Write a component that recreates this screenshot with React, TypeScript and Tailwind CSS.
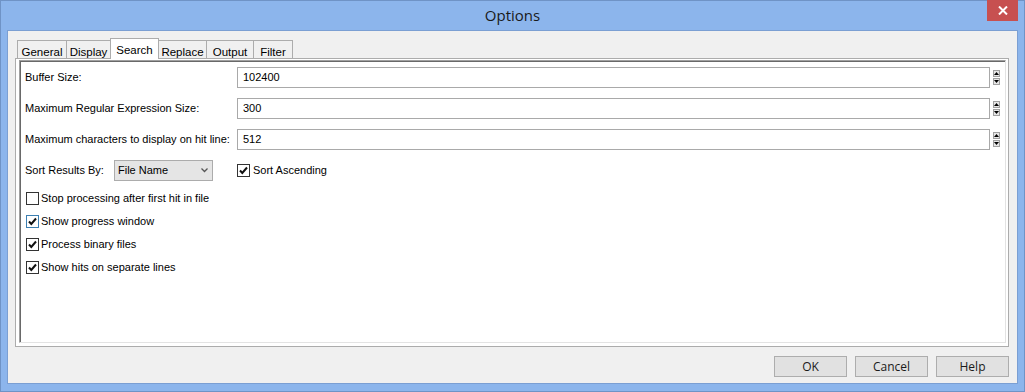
import React from "react";

const ui = "font-['Liberation_Sans',Arial,sans-serif] text-[11px] text-black";

const tabs = [
  { name: "General", w: "w-[50px]" },
  { name: "Display", w: "w-[45px]" },
  { name: "Search", w: "w-[49px]" },
  { name: "Replace", w: "w-[49px]" },
  { name: "Output", w: "w-[48px]" },
  { name: "Filter", w: "w-[40px]" },
];

const CheckMark = () => (
  <svg width="11" height="11" viewBox="0 0 11 11">
    <path d="M2 5.5 L4.3 8 L9 2.5" fill="none" stroke="#111" strokeWidth="2" />
  </svg>
);

const CheckBox = ({ checked, focused }: { checked: boolean; focused?: boolean }) => (
  <span
    className={`flex items-center justify-center w-[13px] h-[13px] bg-white border ${
      focused ? "border-[#3c7fb1]" : "border-[#333333]"
    }`}
  >
    {checked && <CheckMark />}
  </span>
);

const Spinner = () => (
  <div className="flex flex-col gap-[1px] ml-[3px] mr-[5px]">
    <div className="w-[7px] h-[7px] border border-[#a0a0a0] bg-[#e6e6e6] flex items-center justify-center">
      <svg width="5" height="5" viewBox="0 0 5 5">
        <path d="M0 4 L2.5 1 L5 4 Z" fill="#000" />
      </svg>
    </div>
    <div className="w-[7px] h-[7px] border border-[#a0a0a0] bg-[#e6e6e6] flex items-center justify-center">
      <svg width="5" height="5" viewBox="0 0 5 5">
        <path d="M0 1 L2.5 4 L5 1 Z" fill="#000" />
      </svg>
    </div>
  </div>
);

const NumberRow = ({ label, value }: { label: string; value: string }) => (
  <div className="flex items-center h-[21px]">
    <span className="w-[212px] shrink-0">{label}</span>
    <div className="flex-1 h-[21px] border border-[#a9a9a9] bg-white flex items-center pl-[5px]">{value}</div>
    <Spinner />
  </div>
);

const Check = ({ label, checked, focused }: { label: string; checked: boolean; focused?: boolean }) => (
  <div className="flex items-center h-[23px] pl-[1px]">
    <CheckBox checked={checked} focused={focused} />
    <span className="ml-[2px]">{label}</span>
  </div>
);

const Button = ({ label }: { label: string }) => (
  <button className="w-[73px] h-[21px] bg-[#e1e1e1] border border-[#adadad] font-['Open_Sans',sans-serif] text-[12px] text-[#1a1a1a] flex items-center justify-center">
    {label}
  </button>
);

export default function App() {
  return (
    <div className="relative w-[1025px] h-[392px] bg-[#8cb5ec] border border-[#6f93c6] px-[6px] pb-[7px] flex flex-col">
      <div className="h-[29px] flex items-center justify-center font-['Open_Sans',sans-serif] text-[15px] text-[#1a1a1a]">
        Options
      </div>
      <div className="absolute top-[-1px] right-[6px] w-[31px] h-[21px] bg-[#c75050] flex items-center justify-center">
        <svg width="10" height="9" viewBox="0 0 10 9">
          <path d="M1 0.5 L9 8.5 M9 0.5 L1 8.5" stroke="#fff" strokeWidth="2" />
        </svg>
      </div>

      <div className={`flex-1 bg-[#f0f0f0] border border-[#7b9fd3] flex flex-col ${ui}`}>
        <div className="ml-[7px] mr-[8px] mt-[7px] flex flex-col">
          <div className="flex items-end h-[20px] pl-[2px]">
            {tabs.map((t, i) => {
              const active = t.name === "Search";
              return (
                <div
                  key={t.name}
                  className={`${t.w} ${i > 0 ? "-ml-px" : ""} ${
                    active
                      ? "h-[21px] -mb-px bg-white relative z-10 pt-[3px] text-[11.5px]"
                      : "h-[18px] bg-[#f0f0f0] pt-[3px] text-[11.5px]"
                  } border border-b-0 border-[#acacac] flex justify-center`}
                >
                  {t.name}
                </div>
              );
            })}
          </div>

          <div className="h-[289px] border border-[#acacac] bg-white pt-[1px] pl-[3px] pr-[2px] pb-[3px] flex">
            <div className="flex-1 border-t border-l border-[#a0a0a0] border-b border-r border-b-[#e3e3e3] border-r-[#e3e3e3] shadow-[inset_1px_1px_0_#696969] bg-white pt-[6px] pl-[5px] flex flex-col">
              <div className="flex flex-col gap-[10px]">
                <NumberRow label="Buffer Size:" value="102400" />
                <NumberRow label="Maximum Regular Expression Size:" value="300" />
                <NumberRow label="Maximum characters to display on hit line:" value="512" />
                <div className="flex items-center h-[21px]">
                  <span className="w-[89px] shrink-0">Sort Results By:</span>
                  <div className="w-[99px] h-[21px] bg-[#e5e5e5] border border-[#acacac] flex items-center justify-between pl-[3px] pr-[4px]">
                    <span>File Name</span>
                    <svg width="7" height="5" viewBox="0 0 7 5">
                      <path d="M0.5 0.5 L3.5 3.5 L6.5 0.5" fill="none" stroke="#555" strokeWidth="1.3" />
                    </svg>
                  </div>
                  <div className="ml-[24px] flex items-center">
                    <CheckBox checked />
                    <span className="ml-[3px]">Sort Ascending</span>
                  </div>
                </div>
              </div>
              <div className="mt-[6px] flex flex-col">
                <Check label="Stop processing after first hit in file" checked={false} />
                <Check label="Show progress window" checked focused />
                <Check label="Process binary files" checked />
                <Check label="Show hits on separate lines" checked />
              </div>
            </div>
          </div>

          <div className="flex justify-end gap-[8px] mt-[9px]">
            <Button label="OK" />
            <Button label="Cancel" />
            <Button label="Help" />
          </div>
        </div>
      </div>
    </div>
  );
}
